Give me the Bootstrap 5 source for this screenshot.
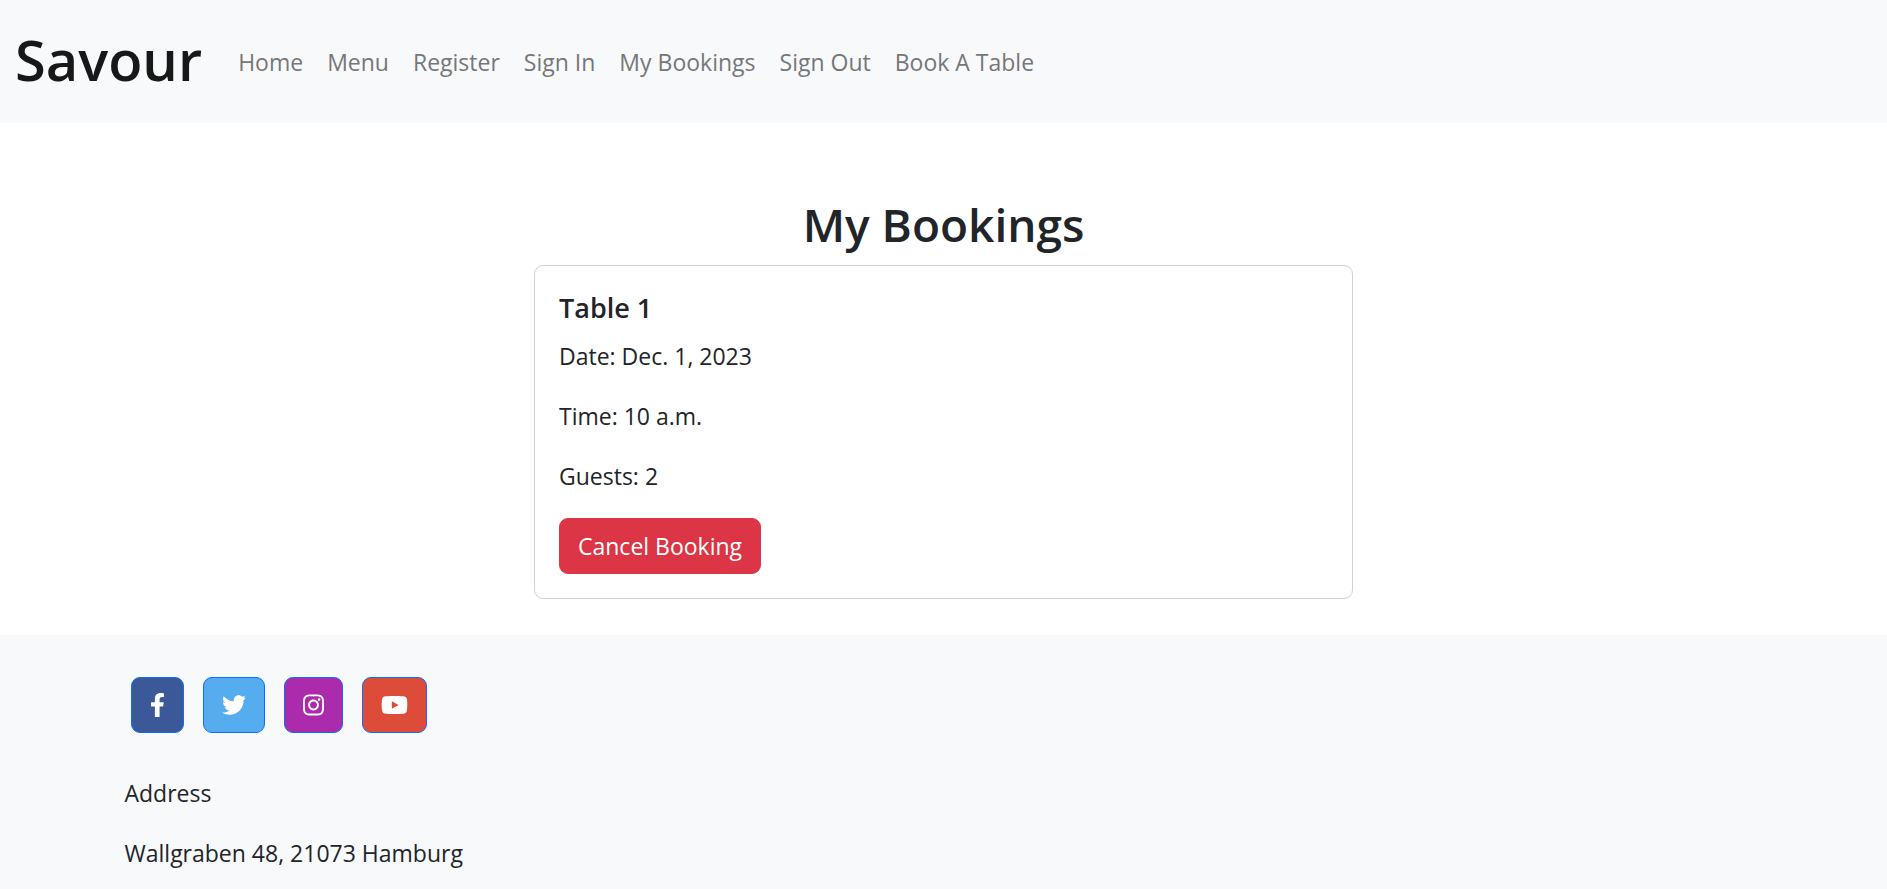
<!DOCTYPE html>
<html lang="en">
<head>
<meta charset="utf-8">
<meta name="viewport" content="width=device-width, initial-scale=1">
<title>Savour - My Bookings</title>
<link href="https://cdn.jsdelivr.net/npm/bootstrap@5.3.0/dist/css/bootstrap.min.css" rel="stylesheet">
<style>
  html { font-size: 24px; }
  body { font-family: "Open Sans", "Noto Sans", sans-serif; font-size: 23px; line-height: 36px; }
  .site-bar { background: #f8f9fb; }
  .navbar > .container-fluid { padding-left: 15px; }
  .site-bar .navbar-brand { color: #181818; }
  .brand-title { font-size: 56px; line-height: 78px; font-weight: 600; margin-bottom: 6px; }
  .site-bar .nav-link { color: #757779; }
  .page-width { max-width: 1710px; }
  .page-title { font-size: 46px; line-height: 58px; font-weight: 600; }
  .booking-title { font-size: 27px; line-height: 36px; font-weight: 600; }
  .card { --bs-card-border-color: #d0d1d2; --bs-card-border-radius: 9px; }
  .btn { --bs-btn-font-size: 23px; --bs-btn-line-height: 36px; --bs-btn-border-radius: 9px; line-height: 36px; }
  .social-row { gap: 7px; }
  .social { --bs-btn-border-color: #0d6efd; display: flex; align-items: center; height: 56px; }
  .social svg { height: 24px; fill: #fff; display: block; }
  .facebook { background: #3b5998; }
  .twitter { background: #55acee; }
  .instagram { background: #ac2bac; }
  .youtube { background: #dd4b39; }
</style>
</head>
<body class="d-flex flex-column min-vh-100">
<nav class="navbar navbar-expand-lg site-bar">
  <div class="container-fluid">
    <a class="navbar-brand" href="#"><h1 class="brand-title">Savour</h1></a>
    <button class="navbar-toggler" type="button" data-bs-toggle="collapse" data-bs-target="#mainNav" aria-controls="mainNav" aria-expanded="false" aria-label="Toggle navigation"><span class="navbar-toggler-icon"></span></button>
    <div class="collapse navbar-collapse" id="mainNav">
      <ul class="navbar-nav">
        <li class="nav-item"><a class="nav-link" href="#">Home</a></li>
        <li class="nav-item"><a class="nav-link" href="#">Menu</a></li>
        <li class="nav-item"><a class="nav-link" href="#">Register</a></li>
        <li class="nav-item"><a class="nav-link" href="#">Sign In</a></li>
        <li class="nav-item"><a class="nav-link" href="#">My Bookings</a></li>
        <li class="nav-item"><a class="nav-link" href="#">Sign Out</a></li>
        <li class="nav-item"><a class="nav-link" href="#">Book A Table</a></li>
      </ul>
    </div>
  </div>
</nav>

<main class="container-fluid page-width pt-5">
  <h2 class="page-title text-center">My Bookings</h2>
  <div class="row justify-content-center">
    <div class="col-12 col-lg-6">
      <div class="card mb-4">
        <div class="card-body">
          <h5 class="card-title booking-title">Table 1</h5>
          <p class="mb-3">Date: Dec. 1, 2023</p>
          <p class="mb-3">Time: 10 a.m.</p>
          <p class="mb-3">Guests: 2</p>
          <button type="button" class="btn btn-danger">Cancel Booking</button>
        </div>
      </div>
    </div>
  </div>
</main>

<footer class="site-bar flex-grow-1">
  <div class="container-fluid page-width p-4 pb-0">
    <section class="social-row d-flex flex-wrap mb-4">
      <a class="btn social facebook m-1" href="#" aria-label="Facebook"><svg viewBox="0 0 320 512" width="15"><path d="M279.14 288l14.22-92.66h-88.91v-60.13c0-25.35 12.42-50.06 52.24-50.06h40.42V6.26S260.43 0 225.36 0c-73.22 0-121.08 44.38-121.08 124.72v70.62H22.89V288h81.39v224h100.17V288z"/></svg></a>
      <a class="btn social twitter m-1" href="#" aria-label="Twitter"><svg viewBox="0 0 512 512" width="24"><path d="M459.37 151.716c.325 4.548.325 9.097.325 13.645 0 138.72-105.583 298.558-298.558 298.558-59.452 0-114.68-17.219-161.137-47.106 8.447.974 16.568 1.299 25.34 1.299 49.055 0 94.213-16.568 130.274-44.832-46.132-.975-84.792-31.188-98.112-72.772 6.498.974 12.995 1.624 19.818 1.624 9.421 0 18.843-1.3 27.614-3.573-48.081-9.747-84.143-51.98-84.143-102.985v-1.299c13.969 7.797 30.214 12.67 47.431 13.319-28.264-18.843-46.781-51.005-46.781-87.391 0-19.492 5.197-37.36 14.294-52.954 51.655 63.675 129.3 105.258 216.365 109.807-1.624-7.797-2.599-15.918-2.599-24.04 0-57.828 46.782-104.934 104.934-104.934 30.213 0 57.502 12.67 76.67 33.137 23.715-4.548 46.456-13.32 66.599-25.34-7.798 24.366-24.366 44.833-46.132 57.827 21.117-2.273 41.584-8.122 60.426-16.243-14.292 20.791-32.161 39.308-52.628 54.253z"/></svg></a>
      <a class="btn social instagram m-1" href="#" aria-label="Instagram"><svg viewBox="0 0 448 512" width="21"><path d="M224.1 141c-63.6 0-114.9 51.3-114.9 114.9s51.3 114.9 114.9 114.9S339 319.5 339 255.9 287.7 141 224.1 141zm0 189.6c-41.1 0-74.7-33.5-74.7-74.7s33.5-74.7 74.7-74.7 74.7 33.5 74.7 74.7-33.6 74.7-74.7 74.7zm146.4-194.3c0 14.9-12 26.8-26.8 26.8-14.9 0-26.8-12-26.8-26.8s12-26.8 26.8-26.8 26.8 12 26.8 26.8zm76.1 27.2c-1.7-35.9-9.9-67.7-36.2-93.9-26.2-26.2-58-34.4-93.9-36.2-37-2.1-147.9-2.1-184.9 0-35.8 1.7-67.6 9.9-93.9 36.1s-34.4 58-36.2 93.9c-2.1 37-2.1 147.9 0 184.9 1.7 35.9 9.9 67.7 36.2 93.9s58 34.4 93.9 36.2c37 2.1 147.9 2.1 184.9 0 35.9-1.7 67.7-9.9 93.9-36.2 26.2-26.2 34.4-58 36.2-93.9 2.1-37 2.1-147.8 0-184.8zM398.8 388c-7.8 19.6-22.9 34.7-42.6 42.6-29.5 11.7-99.5 9-132.1 9s-102.7 2.6-132.1-9c-19.6-7.8-34.7-22.9-42.6-42.6-11.7-29.5-9-99.5-9-132.1s-2.6-102.7 9-132.1c7.8-19.6 22.9-34.7 42.6-42.6 29.5-11.7 99.5-9 132.1-9s102.7-2.6 132.1 9c19.6 7.8 34.7 22.9 42.6 42.6 11.7 29.5 9 99.5 9 132.1s2.7 102.7-9 132.1z"/></svg></a>
      <a class="btn social youtube m-1" href="#" aria-label="YouTube"><svg viewBox="0 0 576 512" width="27"><path d="M549.655 124.083c-6.281-23.65-24.787-42.276-48.284-48.597C458.781 64 288 64 288 64S117.22 64 74.629 75.486c-23.497 6.322-42.003 24.947-48.284 48.597-11.412 42.867-11.412 132.305-11.412 132.305s0 89.438 11.412 132.305c6.281 23.65 24.787 41.5 48.284 47.821C117.22 448 288 448 288 448s170.78 0 213.371-11.486c23.497-6.321 42.003-24.171 48.284-47.821 11.412-42.867 11.412-132.305 11.412-132.305s0-89.438-11.412-132.305zm-317.51 213.508V175.185l142.739 81.205-142.739 81.201z"/></svg></a>
    </section>
    <section>
      <p class="mb-3">Address</p>
      <p class="mb-0">Wallgraben 48, 21073 Hamburg</p>
    </section>
  </div>
</footer>
<script src="https://cdn.jsdelivr.net/npm/bootstrap@5.3.0/dist/js/bootstrap.bundle.min.js"></script>
</body>
</html>
